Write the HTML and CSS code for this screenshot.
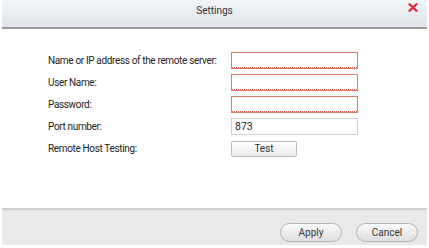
FILE: index.html
```html
<!DOCTYPE html>
<html>
<head>
<meta charset="utf-8">
<link rel="stylesheet" href="styles.css">
</head>
<body>
<div class="dialog">
  <div class="titlebar">
    <span class="title">Settings</span>
    <span class="close"><svg width="10" height="9" viewBox="0 0 10 9"><path d="M1.5 1.2 L8.5 7.8 M8.5 1.2 L1.5 7.8" stroke="#e0202a" stroke-width="2.2" stroke-linecap="round"/></svg></span>
  </div>
  <div class="body">
    <div class="form">
      <div class="row"><span class="label">Name or IP address of the remote server:</span><span class="field invalid"></span></div>
      <div class="row"><span class="label">User Name:</span><span class="field invalid"></span></div>
      <div class="row"><span class="label">Password:</span><span class="field invalid"></span></div>
      <div class="row"><span class="label">Port number:</span><span class="field">873</span></div>
      <div class="row"><span class="label">Remote Host Testing:</span><button class="test">Test</button></div>
    </div>
  </div>
  <div class="footer">
    <button class="pill">Apply</button>
    <button class="pill">Cancel</button>
  </div>
</div>
</body>
</html>
```
FILE: styles.css
```css
html, body { margin: 0; padding: 0; background: #fff; }
body { width: 429px; height: 248px; overflow: hidden; font-family: Roboto, "Liberation Sans", Arial, sans-serif; font-size: 10px; color: #222; }
.dialog { padding: 0 2px 3px; height: 248px; box-sizing: border-box; display: flex; flex-direction: column; }
.titlebar { height: 27px; flex-shrink: 0; background: linear-gradient(#f3f5f8, #dfe4ea); border-bottom: 2px solid #9a9a9a; display: flex; align-items: center; justify-content: center; position: relative; }
.title { font-size: 10px; color: #333; margin-top: -6px; }
.close { position: absolute; right: 9px; top: 3px; width: 10px; height: 9px; }
.close svg { display: block; }
.body { flex: 1; }
.form { padding: 23px 0 0 46px; display: flex; flex-direction: column; gap: 5px; }
.row { display: flex; align-items: center; height: 17px; }
.label { width: 183px; flex-shrink: 0; white-space: nowrap; letter-spacing: -0.35px; }
.field { width: 122px; height: 15px; border: 1px solid #cfd3d6; line-height: 15px; padding: 0 0 0 3px; box-sizing: content-box; font-size: 10.5px; }
.field.invalid { border-color: #de7a68; background-image: repeating-linear-gradient(90deg, #e2554a 0 1px, transparent 1px 2px); background-repeat: no-repeat; background-size: 100% 1px; background-position: 0 100%; }
.test { width: 66px; height: 16px; margin: 0; padding: 0; border: 1px solid #b8bcc0; border-radius: 2px; background: linear-gradient(#ffffff, #e9eaeb); font: inherit; font-size: 10px; color: #333; }
.footer { height: 32px; flex-shrink: 0; background: #e9e9e9; border-top: 2px solid #cfcfcf; display: flex; align-items: flex-end; justify-content: flex-end; gap: 14px; padding: 0 9px 3px 0; box-sizing: content-box; }
.pill { width: 62px; height: 19px; margin: 0; padding: 0; border: 1px solid #b3b3b3; border-radius: 10px; background: linear-gradient(#fbfbfb, #dedede); font: inherit; font-size: 10px; color: #333; }
```
